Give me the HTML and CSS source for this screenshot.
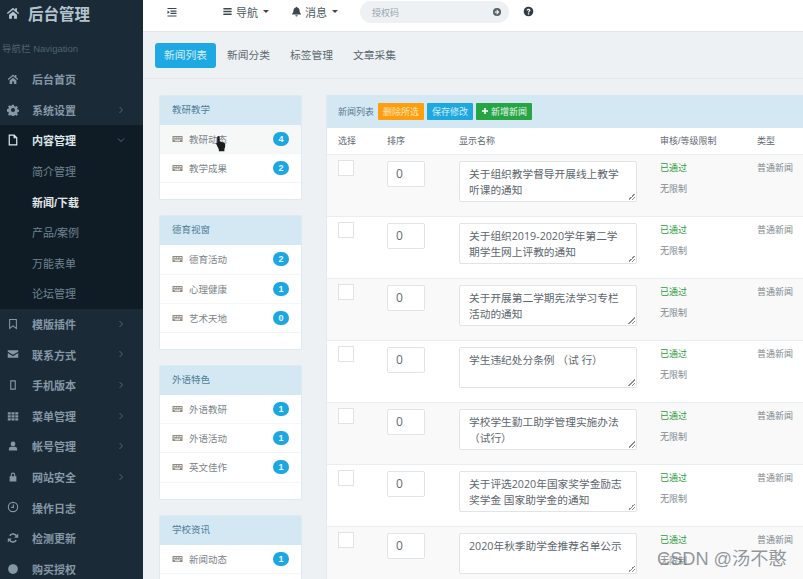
FILE: index.html
```html
<!DOCTYPE html>
<html lang="zh-CN">
<head>
  <meta charset="UTF-8">
  <title>后台管理</title>
  <link rel="stylesheet" href="styles.css">
</head>
<body>
  <svg class="defs" width="0" height="0">
    <symbol id="i-home" viewBox="0 0 16 16"><path d="M8 2 1 8l1 1.2L8 4.2l6 5L15 8l-2.500-2.100V2.500h-2v1.700zM3.500 10v4.500h3.300v-3.300h2.400v3.300h3.300V10L8 6.200z"/></symbol>
    <symbol id="i-gear" viewBox="0 0 16 16"><path fill-rule="evenodd" d="M6.700 1.500h2.600l.4 2 1.300.6 1.800-1.100 1.800 1.800-1.100 1.800.6 1.300 2 .4v2.600l-2 .4-.6 1.300 1.100 1.800-1.800 1.800-1.800-1.100-1.300.6-.4 1.700H6.700l-.4-1.700-1.300-.6-1.800 1.100-1.800-1.800 1.100-1.800-.6-1.300-1.900-.4V7.300l1.900-.4.6-1.300L1.400 3.800l1.800-1.800L5 3.100l1.300-.6zM8 5.800a2.700 2.700 0 1 0 0 5.400 2.700 2.700 0 0 0 0-5.400z" transform="translate(0 -.5)"/></symbol>
    <symbol id="i-file" viewBox="0 0 16 16"><path fill="none" stroke="currentColor" stroke-width="1.600" d="M3 1.500h6.500l3.500 3.500v9.500H3zM9.500 1.500V5H13"/></symbol>
    <symbol id="i-bookmark" viewBox="0 0 16 16"><path fill="none" stroke="currentColor" stroke-width="1.400" d="M3.500 2h9v12L8 10.500 3.500 14z"/></symbol>
    <symbol id="i-mail" viewBox="0 0 16 16"><path d="M1 3h14v2L8 9 1 5zM1 6.800 8 11l7-4.200V13H1z"/></symbol>
    <symbol id="i-phone" viewBox="0 0 16 16"><path fill="none" stroke="currentColor" stroke-width="1.500" d="M5 2.500h6v11H5z"/></symbol>
    <symbol id="i-grid" viewBox="0 0 16 16"><path d="M1 3h4v3H1zM6 3h4v3H6zM11 3h4v3h-4zM1 7h4v3H1zM6 7h4v3H6zM11 7h4v3h-4zM1 11h4v3H1zM6 11h4v3H6zM11 11h4v3h-4z"/></symbol>
    <symbol id="i-user" viewBox="0 0 16 16"><path d="M8 2a3.200 3.200 0 1 1 0 6.400A3.200 3.200 0 0 1 8 2zM2.500 14v-2c0-2 1.500-3 3-3h5c1.500 0 3 1 3 3v2z"/></symbol>
    <symbol id="i-lock" viewBox="0 0 16 16"><path fill-rule="evenodd" d="M3.500 7H5V5a3 3 0 0 1 6 0v2h1.500v7h-9zM6.500 7h3V5a1.500 1.500 0 0 0-3 0z"/></symbol>
    <symbol id="i-clock" viewBox="0 0 16 16"><circle cx="8" cy="8" r="6.200" fill="none" stroke="currentColor" stroke-width="1.500"/><path fill="none" stroke="currentColor" stroke-width="1.500" d="M8.500 4.500V8.500H5.500"/></symbol>
    <symbol id="i-refresh" viewBox="0 0 16 16"><path fill="none" stroke="currentColor" stroke-width="2" d="M13 6.500A5.200 5.200 0 0 0 3.700 5M3 9.500A5.200 5.200 0 0 0 12.300 11"/><path d="M15 2v5.500H9.500zM1 14V8.500h5.500z"/></symbol>
    <symbol id="i-dot" viewBox="0 0 16 16"><circle cx="8" cy="8" r="6.500"/></symbol>
    <symbol id="i-right" viewBox="0 0 8 8"><path fill="none" stroke="currentColor" d="M2.500 1 5.500 4 2.500 7"/></symbol>
    <symbol id="i-down" viewBox="0 0 8 8"><path fill="none" stroke="currentColor" d="M1 2.500 4 5.500 7 2.500"/></symbol>
    <symbol id="i-indent" viewBox="0 0 16 16"><path d="M2 2.500h12v1.600H2zM6 6h8v1.500H6zM6 9h8v1.500H6zM2 12.500h12v1.500H2zM2 6l3 2.200L2 10.500z"/></symbol>
    <symbol id="i-bars" viewBox="0 0 16 16"><path d="M2 3h12v2H2zM2 7h12v2H2zM2 11h12v2H2z"/></symbol>
    <symbol id="i-bell" viewBox="0 0 16 16"><path d="M8 1a1 1 0 0 1 1 1c2.500.5 3.500 2.500 3.500 5 0 2.500 1 3.500 2 4.500v1h-13v-1c1-1 2-2 2-4.500 0-2.500 1-4.500 3.500-5a1 1 0 0 1 1-1zM6.300 13.500h3.400a1.700 1.700 0 0 1-3.400 0z"/></symbol>
    <symbol id="i-go" viewBox="0 0 16 16"><path fill-rule="evenodd" d="M8 1.500a6.500 6.500 0 1 1 0 13 6.500 6.500 0 0 1 0-13zM8 4.200 6.800 5.400l1.600 1.600H4.500v2h3.900l-1.600 1.600L8 11.800 11.800 8z"/></symbol>
    <symbol id="i-help" viewBox="0 0 16 16"><path fill-rule="evenodd" d="M8 1a7 7 0 1 1 0 14A7 7 0 0 1 8 1zM5.200 6.200l1.800.5c.1-.6.500-1 1-1s.9.300.9.700c0 .8-1.700 1-1.700 2.900h1.800c0-1 1.800-1.300 1.800-3 0-1.500-1.300-2.300-2.800-2.300-1.500 0-2.500.8-2.800 2.200zM7.100 10.500v1.800h1.900v-1.800z"/></symbol>
    <symbol id="i-keys" viewBox="0 0 16 12"><path fill-rule="evenodd" d="M.5 1.500h15v9H.5zM2 3v1.500h1.500V3zM4.500 3v1.500H6V3zM7 3v1.500h1.500V3zM9.500 3v1.500H11V3zM12 3v1.500h2V3zM2 5.500V7h2V5.500zM5 5.500V7h1.500V5.500zM7.500 5.500V7H9V5.500zM10 5.500V7h1.500V5.500zM12.500 5.500V7H14V5.500zM4 8v1.200h8V8z"/></symbol>
    <symbol id="i-plus" viewBox="0 0 16 16"><path d="M6.500 2h3v4.500H14v3H9.500V14h-3V9.500H2v-3h4.500z"/></symbol>
  </svg>

  <div class="app">
    <aside class="sidebar">
      <div class="logo"><svg class="logo-icon"><use href="#i-home"/></svg><span>后台管理</span></div>
      <div class="nav-label">导航栏 Navigation</div>
      <ul class="nav">
        <li class="nav-item"><svg class="nav-icon"><use href="#i-home"/></svg>后台首页</li>
        <li class="nav-item"><svg class="nav-icon"><use href="#i-gear"/></svg>系统设置<svg class="nav-arrow"><use href="#i-right"/></svg></li>
        <li class="nav-group">
          <div class="nav-item open"><svg class="nav-icon"><use href="#i-file"/></svg>内容管理<svg class="nav-arrow"><use href="#i-down"/></svg></div>
          <div class="nav-item sub">简介管理</div>
          <div class="nav-item sub current">新闻/下载</div>
          <div class="nav-item sub">产品/案例</div>
          <div class="nav-item sub">万能表单</div>
          <div class="nav-item sub">论坛管理</div>
        </li>
        <li class="nav-item"><svg class="nav-icon"><use href="#i-bookmark"/></svg>模版插件<svg class="nav-arrow"><use href="#i-right"/></svg></li>
        <li class="nav-item"><svg class="nav-icon"><use href="#i-mail"/></svg>联系方式<svg class="nav-arrow"><use href="#i-right"/></svg></li>
        <li class="nav-item"><svg class="nav-icon"><use href="#i-phone"/></svg>手机版本<svg class="nav-arrow"><use href="#i-right"/></svg></li>
        <li class="nav-item"><svg class="nav-icon"><use href="#i-grid"/></svg>菜单管理<svg class="nav-arrow"><use href="#i-right"/></svg></li>
        <li class="nav-item"><svg class="nav-icon"><use href="#i-user"/></svg>帐号管理<svg class="nav-arrow"><use href="#i-right"/></svg></li>
        <li class="nav-item"><svg class="nav-icon"><use href="#i-lock"/></svg>网站安全<svg class="nav-arrow"><use href="#i-right"/></svg></li>
        <li class="nav-item"><svg class="nav-icon"><use href="#i-clock"/></svg>操作日志</li>
        <li class="nav-item"><svg class="nav-icon"><use href="#i-refresh"/></svg>检测更新</li>
        <li class="nav-item"><svg class="nav-icon"><use href="#i-dot"/></svg>购买授权</li>
      </ul>
    </aside>

    <main class="main">
      <header class="topbar">
        <svg class="top-indent"><use href="#i-indent"/></svg>
        <div class="top-menu first"><svg class="top-icon"><use href="#i-bars"/></svg>导航<i class="caret"></i></div>
        <div class="top-menu"><svg class="top-icon"><use href="#i-bell"/></svg>消息<i class="caret"></i></div>
        <div class="search"><span>授权码</span><svg class="search-go"><use href="#i-go"/></svg></div>
        <svg class="top-help"><use href="#i-help"/></svg>
      </header>

      <nav class="tabs">
        <a class="tab active">新闻列表</a>
        <a class="tab">新闻分类</a>
        <a class="tab">标签管理</a>
        <a class="tab">文章采集</a>
      </nav>

      <div class="content">
        <div class="cats">
          <section class="panel">
            <h3 class="panel-title">教研教学</h3>
            <ul class="cat-list">
              <li class="cat hover"><svg class="cat-icon"><use href="#i-keys"/></svg>教研动态<b class="badge">4</b></li>
              <li class="cat"><svg class="cat-icon"><use href="#i-keys"/></svg>教学成果<b class="badge">2</b></li>
            </ul>
          </section>
          <section class="panel">
            <h3 class="panel-title">德育视窗</h3>
            <ul class="cat-list">
              <li class="cat"><svg class="cat-icon"><use href="#i-keys"/></svg>德育活动<b class="badge">2</b></li>
              <li class="cat"><svg class="cat-icon"><use href="#i-keys"/></svg>心理健康<b class="badge">1</b></li>
              <li class="cat"><svg class="cat-icon"><use href="#i-keys"/></svg>艺术天地<b class="badge">0</b></li>
            </ul>
          </section>
          <section class="panel">
            <h3 class="panel-title">外语特色</h3>
            <ul class="cat-list">
              <li class="cat"><svg class="cat-icon"><use href="#i-keys"/></svg>外语教研<b class="badge">1</b></li>
              <li class="cat"><svg class="cat-icon"><use href="#i-keys"/></svg>外语活动<b class="badge">1</b></li>
              <li class="cat"><svg class="cat-icon"><use href="#i-keys"/></svg>英文佳作<b class="badge">1</b></li>
            </ul>
          </section>
          <section class="panel">
            <h3 class="panel-title">学校资讯</h3>
            <ul class="cat-list">
              <li class="cat"><svg class="cat-icon"><use href="#i-keys"/></svg>新闻动态<b class="badge">1</b></li>
            </ul>
          </section>
        </div>

        <section class="news">
          <div class="news-head">
            <span class="news-title">新闻列表</span>
            <a class="btn orange">删除所选</a>
            <a class="btn blue">保存修改</a>
            <a class="btn green"><svg class="btn-icon"><use href="#i-plus"/></svg>新增新闻</a>
          </div>
          <table class="news-table">
            <thead>
              <tr><th class="c-check">选择</th><th class="c-sort">排序</th><th class="c-name">显示名称</th><th class="c-audit">审核/等级限制</th><th>类型</th></tr>
            </thead>
            <tbody>
              <tr>
                <td><i class="check"></i></td><td><div class="num">0</div></td>
                <td><div class="name">关于组织教学督导开展线上教学听课的通知</div></td>
                <td><div class="ok">已通过</div><div class="limit">无限制</div></td><td>普通新闻</td>
              </tr>
              <tr>
                <td><i class="check"></i></td><td><div class="num">0</div></td>
                <td><div class="name">关于组织2019-2020学年第二学期学生网上评教的通知</div></td>
                <td><div class="ok">已通过</div><div class="limit">无限制</div></td><td>普通新闻</td>
              </tr>
              <tr>
                <td><i class="check"></i></td><td><div class="num">0</div></td>
                <td><div class="name">关于开展第二学期宪法学习专栏活动的通知</div></td>
                <td><div class="ok">已通过</div><div class="limit">无限制</div></td><td>普通新闻</td>
              </tr>
              <tr>
                <td><i class="check"></i></td><td><div class="num">0</div></td>
                <td><div class="name">学生违纪处分条例 （试 行）</div></td>
                <td><div class="ok">已通过</div><div class="limit">无限制</div></td><td>普通新闻</td>
              </tr>
              <tr>
                <td><i class="check"></i></td><td><div class="num">0</div></td>
                <td><div class="name">学校学生勤工助学管理实施办法（试行）</div></td>
                <td><div class="ok">已通过</div><div class="limit">无限制</div></td><td>普通新闻</td>
              </tr>
              <tr>
                <td><i class="check"></i></td><td><div class="num">0</div></td>
                <td><div class="name">关于评选2020年国家奖学金励志奖学金 国家助学金的通知</div></td>
                <td><div class="ok">已通过</div><div class="limit">无限制</div></td><td>普通新闻</td>
              </tr>
              <tr>
                <td><i class="check"></i></td><td><div class="num">0</div></td>
                <td><div class="name">2020年秋季助学金推荐名单公示</div></td>
                <td><div class="ok">已通过</div><div class="limit">无限制</div></td><td>普通新闻</td>
              </tr>
            </tbody>
          </table>
        </section>
      </div>
    </main>
  </div>

  <svg class="cursor" viewBox="0 0 14 20"><path d="M4 1.500c1 0 1.500.6 1.500 1.500v5l.8-.2.700.2.900.1.800.3 1 .2 1.300.7c.8.600 1 1.400 1 2.500 0 1.800-.3 3.300-1 4.700v2.500H4.500v-2L1.500 11c-.6-1 0-2 1-1.800l.0-6.200c0-.9.500-1.500 1.500-1.500z"/></svg>
  <div class="watermark">CSDN @汤不憨</div>
</body>
</html>
```

FILE: styles.css
```css
* {
  box-sizing: border-box;
}

html, body {
  margin: 0;
  height: 579px;
  overflow: hidden;
}

body {
  position: relative;
  font-family: "Liberation Sans", "Noto Sans CJK SC", sans-serif;
  background: #edf1f3;
  color: #58666e;
}

ul {
  list-style: none;
  margin: 0;
  padding: 0;
}

.defs {
  position: absolute;
}

.app {
  display: flex;
  height: 579px;
}

/* sidebar */
.sidebar {
  width: 143px;
  flex: none;
  background: #1a2a36;
  color: #8598a6;
  overflow: hidden;
}

.logo {
  display: flex;
  align-items: center;
  height: 25px;
  color: #b4c4cf;
  font-size: 15.500px;
  font-weight: bold;
}

.logo-icon {
  width: 14px;
  height: 14px;
  margin: 0 8px 0 6px;
  fill: currentColor;
}

.nav-label {
  height: 39px;
  padding: 17px 0 0 2px;
  font-size: 9.500px;
  line-height: 14px;
  color: #4f6372;
  white-space: nowrap;
}

.nav-item {
  display: flex;
  align-items: center;
  height: 30.600px;
  padding-left: 32px;
  position: relative;
  font-size: 11px;
  font-weight: bold;
}

.nav-icon {
  position: absolute;
  left: 7px;
  top: 9px;
  width: 12px;
  height: 12px;
  fill: currentColor;
  color: #8598a6;
}

.nav-arrow {
  position: absolute;
  left: 117px;
  top: 11px;
  width: 8px;
  height: 8px;
  color: #52687a;
}

.nav-group {
  background: #101c25;
}

.nav-item.open {
  color: #dfe6ea;
}

.nav-item.open .nav-icon {
  color: #dfe6ea;
}

.nav-item.sub {
  font-weight: normal;
  color: #6f8391;
}

.nav-item.current {
  color: #e4e9ec;
  font-weight: bold;
}

/* top */
.main {
  flex: 1;
  min-width: 0;
}

.topbar {
  display: flex;
  align-items: center;
  height: 32px;
  padding: 0 0 8px 23px;
  background: #fff;
  border-bottom: 1px solid #e4e7e9;
  font-size: 11px;
  color: #4e5a62;
}

.top-indent {
  width: 12px;
  height: 12px;
  fill: #3d474e;
}

.top-menu {
  display: flex;
  align-items: center;
  margin-right: 22px;
}

.top-menu.first {
  margin-left: 44px;
}

.top-icon {
  width: 11px;
  height: 11px;
  margin-right: 3px;
  fill: #3d474e;
}

.caret {
  width: 0;
  height: 0;
  margin-left: 5px;
  border: 3px solid transparent;
  border-top-color: #3d474e;
  border-bottom: 0;
}

.search {
  display: flex;
  align-items: center;
  justify-content: space-between;
  width: 149px;
  height: 22px;
  margin-top: 1px;
  padding: 0 7px 0 12px;
  border-radius: 11px;
  background: #edf1f3;
  font-size: 9px;
  color: #9aa5ac;
}

.search-go {
  width: 10px;
  height: 10px;
  fill: #59646b;
}

.top-help {
  width: 11px;
  height: 11px;
  margin-left: 14px;
  fill: #333c42;
}

.tabs {
  display: flex;
  align-items: center;
  height: 47px;
  padding-left: 12px;
  border-bottom: 1px solid #e4e8ea;
  font-size: 10.750px;
}

.tab {
  padding: 0 10px;
  line-height: 25px;
  border-radius: 3px;
  color: #5b676e;
}

.tab.active {
  margin-right: 1px;
  padding: 0 9px;
  background: #1ea9e3;
  color: #d5eef9;
}

/* content */
.content {
  display: flex;
  gap: 24px;
  padding: 16px 0 0 16px;
}

.cats {
  flex: none;
  width: 143px;
}

.panel {
  margin-bottom: 15px;
  padding-bottom: 16px;
  background: #fff;
  border: 1px solid #dcebf2;
  border-radius: 2px;
}

.panel-title {
  height: 29px;
  margin: 0;
  padding-left: 12px;
  background: #d4e8f4;
  font-size: 9.500px;
  font-weight: normal;
  line-height: 27px;
  color: #4f7d96;
}

.cat {
  display: flex;
  align-items: center;
  height: 29.200px;
  padding: 0 12px;
  border-bottom: 1px solid #f3f5f6;
  font-size: 9.500px;
  color: #7a8388;
}

.cat.hover {
  background: #f6f7f7;
}

.cat-icon {
  width: 11px;
  height: 8px;
  margin-right: 6px;
  fill: #8e8a7f;
}

.badge {
  width: 16px;
  height: 14px;
  margin-left: auto;
  border-radius: 8px;
  background: #1ca7e2;
  font-size: 9px;
  line-height: 14px;
  text-align: center;
  color: #e6f6fd;
}

.news {
  flex: 1;
  min-width: 0;
  background: #fff;
  border-left: 1px solid #dcebf2;
}

.news-head {
  display: flex;
  align-items: center;
  gap: 3px;
  height: 33px;
  padding: 0 0 1px 11px;
  background: #d4e8f4;
  font-size: 9px;
}

.news-title {
  margin-right: 1px;
  color: #567a8f;
}

.btn {
  display: flex;
  align-items: center;
  height: 17px;
  padding: 0 5px;
  border-radius: 1px;
  color: #e9f4ee;
}

.orange {
  background: #ff9f0f;
  color: #fbe3bb;
}

.blue {
  background: #1fa8e0;
  color: #d2eefa;
}

.green {
  background: #27a544;
}

.btn-icon {
  width: 8px;
  height: 8px;
  margin-right: 2px;
  fill: #fff;
}

.news-table {
  width: 477px;
  table-layout: fixed;
  border-collapse: collapse;
  font-size: 9px;
}

.news-table th {
  height: 26px;
  padding: 0;
  font-weight: normal;
  text-align: left;
  color: #5f6a71;
}

.c-check,
.news-table td:first-child {
  width: 60px;
}

.news-table th:first-child,
.news-table td:first-child {
  padding-left: 11px;
}

.c-sort {
  width: 72px;
}

.c-name {
  width: 201px;
}

.c-audit {
  width: 97px;
}

.news-table td {
  height: 62px;
  padding: 6px 0 0;
  vertical-align: top;
  border-top: 1px solid #e9eef1;
  color: #7f888e;
}

.news-table tbody tr:nth-child(odd) {
  background: #f9f9f9;
}

.check {
  display: block;
  width: 16px;
  height: 16px;
  margin-top: -1px;
  background: #fff;
  border: 1px solid #dfe3e6;
}

.num {
  width: 38px;
  height: 26px;
  background: #fff;
  border: 1px solid #e1e4e6;
  border-radius: 2px;
  font-family: "Open Sans", sans-serif;
  font-size: 12px;
  line-height: 24px;
  padding-left: 8px;
  color: #5f6a71;
}

.name {
  position: relative;
  width: 178px;
  height: 41px;
  padding: 4px 12px 0 9px;
  background: #fff;
  border: 1px solid #e1e4e6;
  border-radius: 2px;
  font-family: "Open Sans", "Noto Sans CJK SC", sans-serif;
  font-size: 10.700px;
  line-height: 16px;
  color: #5c666d;
}

/* textarea resize handle */
.name::after {
  content: "";
  position: absolute;
  right: 1px;
  bottom: 1px;
  width: 7px;
  height: 7px;
  background: linear-gradient(135deg, transparent 50%, #8c8c8c 50%, #8c8c8c 60%, transparent 60%, transparent 75%, #8c8c8c 75%, #8c8c8c 85%, transparent 85%);
}

.ok {
  color: #2f9c3f;
  line-height: 14px;
}

.limit {
  margin-top: 7px;
  line-height: 14px;
}

/* overlays */
.cursor {
  position: absolute;
  left: 215px;
  top: 135px;
  width: 12px;
  height: 17px;
  fill: #1c1c1c;
}

.watermark {
  position: absolute;
  left: 657px;
  top: 547px;
  font-size: 18.200px;
  line-height: 24px;
  color: rgba(110, 118, 124, .75);
  white-space: nowrap;
}
```
